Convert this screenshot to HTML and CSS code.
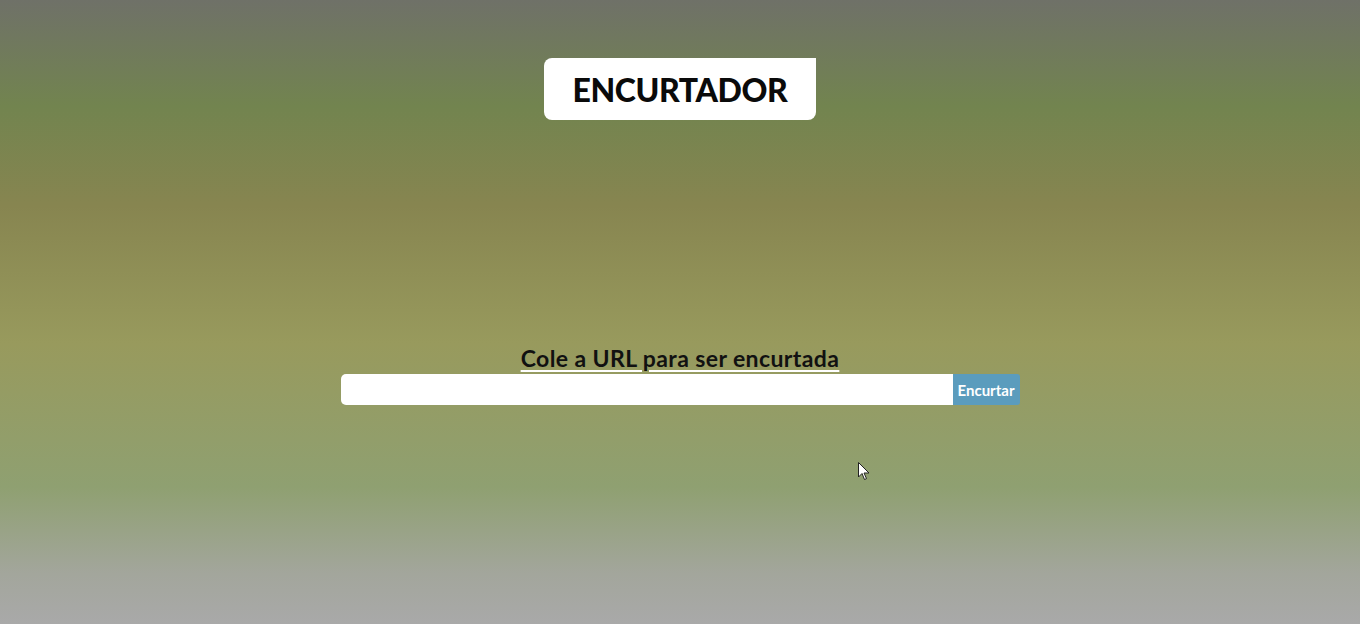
FILE: index.html
```html
<!DOCTYPE html>
<html lang="pt">
<head>
<meta charset="utf-8">
<title>Encurtador</title>
<link rel="stylesheet" href="styles.css">
</head>
<body>
<main class="page">
  <header class="brand">
    <h1 class="brand-title">ENCURTADOR</h1>
  </header>
  <section class="shortener">
    <h2 class="shortener-label">Cole a URL para ser encurtada</h2>
    <form class="shortener-form">
      <input class="shortener-input" type="text" aria-label="URL">
      <button class="shortener-button" type="button">Encurtar</button>
    </form>
  </section>
  <svg class="cursor" width="12" height="19" viewBox="0 0 12 19"><path d="M0.5 0.5 L0.5 15 L4 11.5 L6.5 17.5 L8.5 16.6 L6 11 L11 11 Z" fill="#fff" stroke="#222" stroke-width="1"/></svg>
</main>
</body>
</html>
```
FILE: styles.css
```css
html, body {
  margin: 0;
  padding: 0;
}
body {
  height: 624px;
  overflow: hidden;
  font-family: "Lato", "Noto Sans", sans-serif;
  background: linear-gradient(to bottom,
    #6f7168 0%,
    #72844f 17%,
    #878550 33%,
    #989a5d 55%,
    #8fa071 78%,
    #a3a69c 92%,
    #a9a9a9 100%);
}
.page {
  position: relative;
  height: 624px;
  display: flex;
  flex-direction: column;
  align-items: center;
}
.brand {
  margin-top: 58px;
  width: 272px;
  height: 62px;
  background: #fff;
  border-radius: 8px 0 8px 8px;
  display: flex;
  align-items: center;
  justify-content: center;
}
.brand-title {
  margin: 0;
  font-size: 32px;
  font-weight: 900;
  color: #0a0a0a;
  letter-spacing: -0.4px;
}
.shortener {
  margin-top: 224px;
  display: flex;
  flex-direction: column;
  align-items: center;
}
.shortener-label {
  margin: 0;
  font-size: 23px;
  font-weight: 700;
  color: #111;
  line-height: 29px;
  letter-spacing: 0.4px;
  text-decoration: underline;
  text-decoration-color: #fff;
  text-decoration-thickness: 2px;
  text-underline-offset: 3px;
}
.shortener-form {
  margin: 1px 0 0;
  display: flex;
}
.shortener-input {
  width: 612px;
  height: 31px;
  box-sizing: border-box;
  border: none;
  border-radius: 5px 0 0 5px;
  background: #fff;
  margin: 0;
  padding: 0 8px;
  outline: none;
}
.shortener-button {
  width: 67px;
  height: 31px;
  border: none;
  margin: 0;
  background: #5b9cbd;
  color: #fff;
  font-family: "Lato", sans-serif;
  font-weight: 700;
  font-size: 15px;
  padding: 0;
  border-radius: 0 3px 3px 0;
}
.cursor {
  position: absolute;
  left: 858px;
  top: 462px;
}
```
